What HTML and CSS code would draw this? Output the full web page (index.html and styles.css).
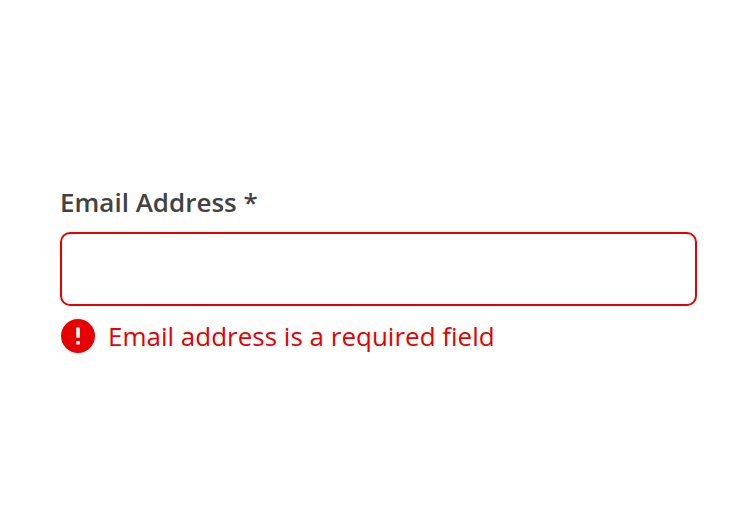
FILE: index.html
```html
<!DOCTYPE html>
<html lang="en">
<head>
<meta charset="utf-8">
<title>Email Address</title>
<link rel="stylesheet" href="styles.css">
</head>
<body>
<form class="field">
  <label class="label" for="email">Email Address *</label>
  <input class="input" id="email" type="email" aria-describedby="email-error">
  <div class="error" id="email-error">
    <svg class="icon" viewBox="0 0 34 34" aria-hidden="true"><circle cx="17" cy="17" r="17" fill="#e60000"/><path d="M15.2 8.6h3.6v10.1h-3.6zM15.2 22h3.6v3.4h-3.6z" fill="#fff"/></svg>
    <span>Email address is a required field</span>
  </div>
</form>
</body>
</html>
```

FILE: styles.css
```css
body {
  margin: 0;
  background: #fff;
  font-family: "Open Sans", sans-serif;
}

.field {
  display: flex;
  flex-direction: column;
  padding: 184px 59px 0 60px;
}

.label {
  font-size: 26px;
  font-weight: 600;
  line-height: 36px;
  color: #424242;
}

.input {
  box-sizing: border-box;
  width: 100%;
  height: 74px;
  margin: 12px 0 0;
  border: 2px solid #e60000;
  border-radius: 10px;
  background: #fff;
  outline: none;
}

.error {
  display: flex;
  align-items: center;
  gap: 13px;
  height: 36px;
  margin: 12px 0 0 1px;
  font-size: 26px;
  line-height: 36px;
  color: #e60000;
}

.icon {
  width: 34px;
  height: 34px;
}
```
